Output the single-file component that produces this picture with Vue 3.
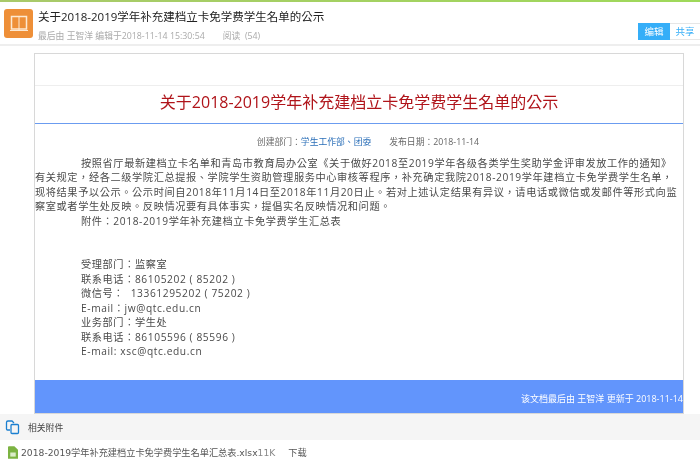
<script setup>
const contacts = [
  '受理部门：监察室',
  '联系电话：86105202 ( 85202 )',
  '微信号：\u00a0 13361295202 ( 75202 )',
  'E-mail：jw@qtc.edu.cn',
  '业务部门：学生处',
  '联系电话：86105596 ( 85596 )',
  'E-mail: xsc@qtc.edu.cn'
]
</script>

<template>
  <div class="page">
    <div class="topline"></div>
    <header class="head">
      <div class="logo">
        <svg width="20" height="19" viewBox="0 0 20 19" fill="none" stroke="#fde9d2" stroke-width="1.5">
          <path d="M2.5 2.5H17.5V15H2.5Z" />
          <path d="M10 2.5V16.5M1 16.5H19" stroke-width="1" />
        </svg>
      </div>
      <div class="headtext">
        <div class="doctitle">关于2018-2019学年补充建档立卡免学费学生名单的公示</div>
        <div class="meta">
          <span>最后由 王智洋 编辑于2018-11-14 15:30:54</span>
          <span class="reads">阅读&nbsp;&nbsp;(54)</span>
        </div>
      </div>
      <div class="tabs">
        <span class="tab on">编辑</span>
        <span class="tab">共享</span>
      </div>
    </header>

    <main class="card">
      <div class="cardtop"></div>
      <h1 class="title">关于2018-2019学年补充建档立卡免学费学生名单的公示</h1>
      <div class="info">
        创建部门：<span class="link">学生工作部、团委</span><span class="date">发布日期：2018-11-14</span>
      </div>
      <div class="body">
        <p class="indent">按照省厅最新建档立卡名单和青岛市教育局办公室《关于做好2018至2019学年各级各类学生奖助学金评审发放工作的通知》</p>
        <p>有关规定，经各二级学院汇总提报、学院学生资助管理服务中心审核等程序，补充确定我院2018-2019学年建档立卡免学费学生名单，</p>
        <p>现将结果予以公示。公示时间自2018年11月14日至2018年11月20日止。若对上述认定结果有异议，请电话或微信或发邮件等形式向监</p>
        <p>察室或者学生处反映。反映情况要有具体事实，提倡实名反映情况和问题。</p>
        <p class="indent">附件：2018-2019学年补充建档立卡免学费学生汇总表</p>
        <div class="contacts">
          <p v-for="c in contacts" :key="c">{{ c }}</p>
        </div>
      </div>
      <div class="foot">该文档最后由 王智洋 更新于 2018-11-14</div>
    </main>

    <section class="attachbar">
      <svg width="16" height="16" viewBox="0 0 16 16" fill="none" stroke="#1b7fd0" stroke-width="1.3">
        <path d="M5 11H2.5A1 1 0 0 1 1.5 10V3.5A1.5 1.5 0 0 1 3 2H7L9 4" />
        <rect x="6" y="5.5" width="7.5" height="9" rx="1" />
      </svg>
      <span>相关附件</span>
    </section>
    <section class="file">
      <svg width="10" height="13" viewBox="0 0 11 14">
        <path d="M0 1A1 1 0 0 1 1 0H7L11 4V14H0Z" fill="#7cb342" />
        <rect x="2.5" y="7" width="6" height="4.5" fill="#dcedc8" />
      </svg>
      <span class="fname">2018-2019学年补充建档立卡免学费学生名单汇总表.xlsx</span>
      <span class="fsize">11K</span>
      <span class="dl">下载</span>
    </section>
  </div>
</template>

<style>
html, body { margin: 0; background: #fff; }
</style>

<style scoped>
.page {
  width: 700px;
  height: 460px;
  overflow: hidden;
  background: #fff;
  font-family: "Open Sans", "Noto Sans CJK TC", sans-serif;
  color: #333;
  filter: blur(0.3px);
  text-spacing-trim: space-all;
}
.topline { height: 2px; background: linear-gradient(90deg, #a9c96a, #9fd95a); }
.head {
  height: 44px;
  box-sizing: border-box;
  display: flex;
  border-bottom: 2px solid #eee;
  padding: 7px 0 0 4px;
}
.logo {
  width: 29px;
  height: 29px;
  background: #ee8f38;
  border-radius: 3px;
  display: flex;
  align-items: center;
  justify-content: center;
}
.headtext { margin-left: 5px; flex: 1; }
.doctitle { font-size: 11.5px; line-height: 16px; color: #222; }
.meta { font-size: 8.8px; line-height: 12px; color: #aaa; margin-top: 5px; }
.reads { margin-left: 18px; }
.tabs { display: flex; align-self: flex-start; margin-top: 14px; }
.tab {
  width: 30px;
  height: 15px;
  line-height: 15px;
  text-align: center;
  font-size: 9.5px;
  color: #35aef8;
  background: #fff;
  border: 1px solid #e6e6e6;
  border-left: 0;
  border-right: 0;
}
.tab.on { width: 32px; background: #35aef8; color: #fff; border-color: #35aef8; }
.card {
  width: 650px;
  height: 361px;
  box-sizing: border-box;
  margin: 7px 0 0 34px;
  border: 1px solid #d8d8d8;
  display: flex;
  flex-direction: column;
  background: #fff;
}
.cardtop { height: 31px; border-bottom: 1px solid #eee; flex: none; }
.title {
  flex: none;
  margin: 0;
  height: 38px;
  box-sizing: border-box;
  line-height: 33px;
  font-size: 16px;
  font-weight: normal;
  color: #b0141a;
  text-align: center;
  border-bottom: 1px solid #6b9cf0;
}
.info {
  flex: none;
  margin-top: 12px;
  padding-left: 18px;
  height: 12px;
  line-height: 12px;
  font-size: 8.8px;
  color: #666;
  text-align: center;
}
.link { color: #2b6fb8; }
.date { margin-left: 18px; }
.body {
  flex: 1;
  margin-top: 8px;
  font-size: 10.2px;
  letter-spacing: 0.6px;
  line-height: 14.45px;
  color: #4a4a4a;
}
.body p { margin: 0; white-space: nowrap; }
.indent { padding-left: 46px; }
.contacts { margin: 29px 0 0 46px; }
.foot {
  flex: none;
  height: 33px;
  box-sizing: border-box;
  background: #6295fc;
  color: #fff;
  font-size: 9px;
  line-height: 12px;
  padding-top: 13px;
  text-align: right;
}
.attachbar {
  height: 26px;
  background: #f5f5f5;
  display: flex;
  align-items: center;
  padding-left: 5px;
  gap: 7px;
  font-size: 8.8px;
  color: #444;
}
.file {
  display: flex;
  align-items: center;
  padding: 2px 0 0 8px;
  height: 20px;
  font-family: "DejaVu Sans", "Noto Sans CJK TC", sans-serif;
  font-size: 9.2px;
  color: #555;
}
.fname { margin-left: 3px; }
.fsize { color: #888; }
.dl { margin-left: 13px; }
</style>
